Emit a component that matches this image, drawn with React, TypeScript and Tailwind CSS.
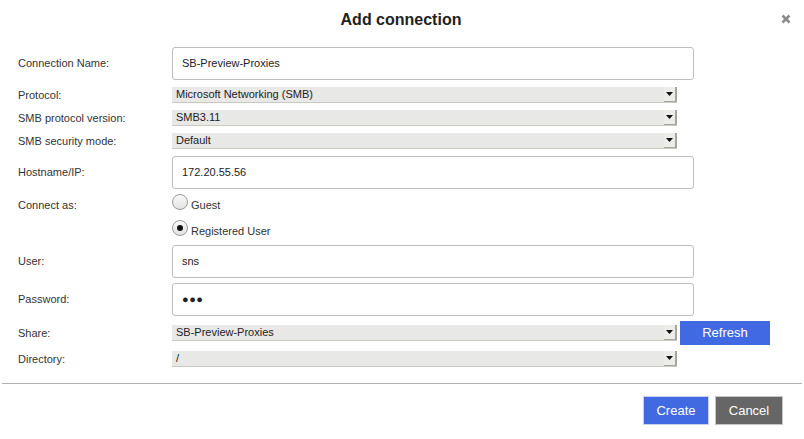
import { ReactNode } from "react";

const LABEL = "text-[11px] text-[#333]";

function Row({ label, h, children, labelPad }: { label: string; h: string; children: ReactNode; labelPad?: string }) {
  return (
    <div className={`flex items-center ${h}`}>
      <div className={`w-[172px] shrink-0 pl-[18px] ${LABEL} ${labelPad ?? ""}`}>{label}</div>
      <div className="flex items-center">{children}</div>
    </div>
  );
}

function TextBox({ value, dots }: { value: string; dots?: boolean }) {
  return (
    <div className="w-[522px] h-[33px] rounded-[3px] border border-[#bdbdbd] bg-white flex items-center pl-[9px]">
      {dots ? (
        <span className="text-[11px] tracking-[0.5px] text-[#222]">●●●</span>
      ) : (
        <span className="text-[11px] text-[#222]">{value}</span>
      )}
    </div>
  );
}

function Dropdown({ value }: { value: string }) {
  return (
    <div className="w-[505px] h-[16px] flex bg-[#e8e8e6] border-b border-[#c9c9c2]">
      <div className="flex-1 pl-[4px] text-[11px] leading-[15px] text-[#222]">{value}</div>
      <div className="w-[13px] h-full flex items-center justify-center border-r-2 border-b border-[#a6a6a0] bg-[#ecece9]">
        <svg width="7" height="4" viewBox="0 0 7 4">
          <path d="M0 0h7L3.5 4z" fill="#111" />
        </svg>
      </div>
    </div>
  );
}

function Radio({ label, checked }: { label: string; checked?: boolean }) {
  return (
    <div className="flex items-end">
      <span className="w-[16px] h-[16px] rounded-full border border-[#9a9a9a] bg-gradient-to-b from-[#fafafa] to-[#e2e2e2] flex items-center justify-center">
        {checked && <span className="w-[6px] h-[6px] rounded-full bg-[#111]" />}
      </span>
      <span className="ml-[3px] text-[11px] text-[#333] leading-[11px] translate-y-[1px]">{label}</span>
    </div>
  );
}

export default function App() {
  return (
    <div className="w-[804px] h-[439px] bg-white font-['Liberation_Sans',Arial,sans-serif] relative">
      <div className="h-[39px] flex items-center justify-center">
        <h1 className="text-[16px] font-bold text-[#222] ml-[-2px]">Add connection</h1>
      </div>
      <button className="absolute right-[12px] top-[12px] w-[12px] h-[14px] flex items-center justify-center">
        <svg width="10" height="10" viewBox="0 0 10 10">
          <path d="M1.5 1.5l7 7M8.5 1.5l-7 7" stroke="#8a8a8a" strokeWidth="2.6" />
        </svg>
      </button>

      <div className="flex flex-col mt-[8px]">
        <Row label="Connection Name:" h="h-[33px]">
          <TextBox value="SB-Preview-Proxies" />
        </Row>
        <div className="h-[7px]" />
        <Row label="Protocol:" h="h-[16px]">
          <Dropdown value="Microsoft Networking (SMB)" />
        </Row>
        <div className="h-[7px]" />
        <Row label="SMB protocol version:" h="h-[16px]">
          <Dropdown value="SMB3.11" />
        </Row>
        <div className="h-[7px]" />
        <Row label="SMB security mode:" h="h-[16px]">
          <Dropdown value="Default" />
        </Row>
        <div className="h-[7px]" />
        <Row label="Hostname/IP:" h="h-[33px]">
          <TextBox value="172.20.55.56" />
        </Row>
        <div className="h-[5px]" />
        <Row label="Connect as:" h="h-[16px]" labelPad="pt-[6px]">
          <Radio label="Guest" />
        </Row>
        <div className="h-[10px]" />
        <div className="flex h-[16px] pl-[172px]">
          <Radio label="Registered User" checked />
        </div>
        <div className="h-[9px]" />
        <Row label="User:" h="h-[33px]">
          <TextBox value="sns" />
        </Row>
        <div className="h-[5px]" />
        <Row label="Password:" h="h-[33px]">
          <TextBox value="" dots />
        </Row>
        <div className="h-[5px]" />
        <Row label="Share:" h="h-[24px]">
          <Dropdown value="SB-Preview-Proxies" />
          <button className="ml-[3px] w-[90px] h-[24px] bg-[#4169e1] text-white text-[13px]">Refresh</button>
        </Row>
        <div className="h-[6px]" />
        <Row label="Directory:" h="h-[16px]">
          <Dropdown value="/" />
        </Row>
      </div>

      <div className="mx-[2px] mt-[16px] border-t border-[#b0b0b0]" />

      <div className="flex justify-end gap-[6px] pr-[21px] mt-[12px]">
        <button className="w-[66px] h-[29px] bg-[#4169e1] border border-[#c9d2ec] text-white text-[13px]">Create</button>
        <button className="w-[68px] h-[29px] bg-[#666] border border-[#c6c6c6] text-white text-[13px]">Cancel</button>
      </div>
    </div>
  );
}
